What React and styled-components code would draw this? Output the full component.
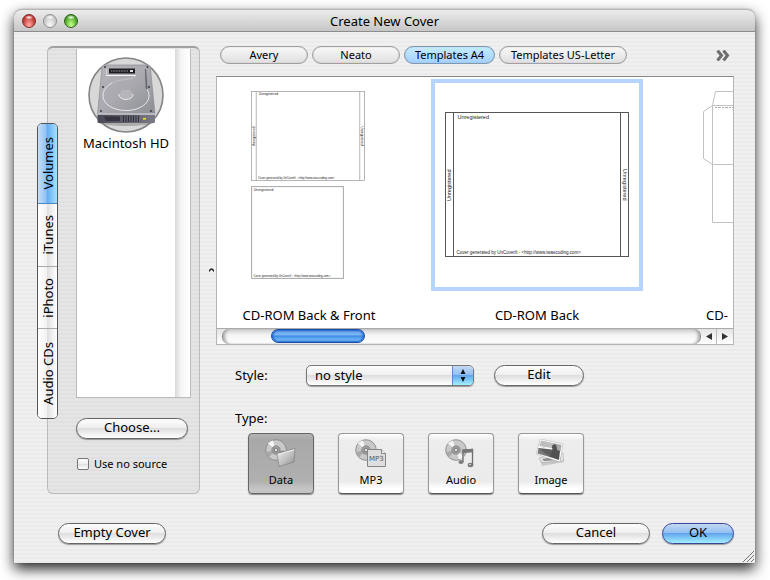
import { useState } from 'react';
import styled, { createGlobalStyle, css } from 'styled-components';

const GlobalStyle = createGlobalStyle`
  *,
  *::before,
  *::after {
    box-sizing: border-box;
  }

  body {
    margin: 0;
    background: #fff;
    color: #000;
    font-family: 'Lucida Grande', 'Noto Sans', 'Open Sans', sans-serif;
    font-size: 13px;
    line-height: 16px;
  }

  button,
  select {
    margin: 0;
    padding: 0;
    color: inherit;
    font: inherit;
  }
`;

const pinstripes = css`
  background-color: #eee;
  background-image: repeating-linear-gradient(
    to bottom,
    #ebebeb 0,
    #ebebeb 2px,
    #f0f0f0 2px,
    #f0f0f0 4px
  );
`;

const Page = styled.main`
  padding: 9px 15px 17px 14px;
  overflow: hidden;
`;

const Window = styled.section`
  ${pinstripes}
  border-radius: 8px 8px 0 0;
  box-shadow: 0 0 1px rgba(0, 0, 0, 0.6), 0 6px 14px rgba(0, 0, 0, 0.85);
  position: relative;
`;

const TitleBar = styled.header`
  display: grid;
  grid-template-columns: 1fr auto 1fr;
  align-items: center;
  height: 23px;
  padding: 0 8px;
  border-top: 1px solid #b4b4b4;
  border-bottom: 1px solid #8c8c8c;
  border-radius: 8px 8px 0 0;
  background: linear-gradient(#ececec, #c6c6c6);
`;

const Title = styled.h1`
  margin: 0;
  font-size: 13px;
  font-weight: 400;
`;

const Lights = styled.div`
  display: flex;
  gap: 7px;
`;

const Light = styled.button`
  width: 14px;
  height: 14px;
  border: 1px solid ${({ $edge }) => $edge};
  border-radius: 50%;
  background: radial-gradient(ellipse 4px 2px at 50% 20%, #fff, transparent),
    radial-gradient(ellipse at 50% 90%, ${({ $glow }) => $glow} 10%, ${({ $base }) => $base} 70%);
`;

const Main = styled.div`
  display: flex;
  padding: 14px 21px 0 23px;
`;

const SourceTabs = styled.div`
  z-index: 1;
  flex: none;
  align-self: flex-start;
  width: 21px;
  margin: 77px -11px 0 0;
  border: 1px solid #555;
  border-radius: 5px;
  overflow: hidden;
`;

const SourceTab = styled.button`
  display: flex;
  align-items: center;
  justify-content: center;
  width: 100%;
  height: ${({ $size }) => $size}px;
  border: 0;
  border-bottom: 1px solid #aaa;
  background: linear-gradient(to right, #fff, #f2f2f2 45%, #dedede 46%, #fff);

  &[aria-selected='true'] {
    border-bottom-color: #4a8ac0;
    background: linear-gradient(to right, #c5dff8, #8fc2f5 44%, #62aaf3 46%, #a6e2ff);
  }

  &:last-child {
    border-bottom: 0;
  }
`;

const TabText = styled.span`
  writing-mode: vertical-rl;
  transform: rotate(180deg);
  line-height: 20px;
`;

const SourcePanel = styled.div`
  flex: none;
  width: 153px;
  padding: 1px 8px 21px 28px;
  border: 1px solid #bbb;
  border-top: 2px solid #a0a0a0;
  border-radius: 6px;
  background: rgba(0, 0, 0, 0.045);
`;

const VolumeBox = styled.div`
  display: flex;
  height: 349px;
  border: 1px solid #bbb;
  border-top: 0;
  background: #fff;
`;

const VolumeList = styled.ul`
  flex: 1;
  margin: 0;
  padding: 8px 0 0;
  list-style: none;
`;

const Volume = styled.li`
  display: flex;
  flex-direction: column;
  align-items: center;
  gap: 2px;
  white-space: nowrap;
`;

const EmptyTrack = styled.div`
  width: 15px;
  background: linear-gradient(to right, #d8d8d8, #f6f6f6 40%, #fff);
`;

const aqua = {
  plain: 'linear-gradient(#fdfdfd, #eee 48%, #dedede 50%, #fff)',
  blue: 'linear-gradient(#c3d8f2, #93c0f2 46%, #62a5ec 50%, #a2f0ff)',
};

const PushButton = styled.button`
  width: ${({ $width }) => $width}px;
  height: 21px;
  padding-bottom: 2px;
  border: 1px solid ${({ $primary }) => ($primary ? '#3a449c' : '#666')};
  border-radius: 11px;
  background: ${({ $primary }) => ($primary ? aqua.blue : aqua.plain)};
  box-shadow: 0 1px 1px rgba(0, 0, 0, 0.35);
  line-height: 17px;
`;

const ChooseButton = styled(PushButton)`
  display: block;
  margin-top: 20px;
`;

const CheckLabel = styled.label`
  display: flex;
  align-items: center;
  gap: 5px;
  margin-top: 17px;
  font-size: 11px;
  white-space: nowrap;
`;

const CheckBox = styled.input`
  appearance: none;
  width: 12px;
  height: 12px;
  margin: 0 0 0 1px;
  border: 1px solid #777;
  border-radius: 2px;
  background: ${aqua.plain};

  &:checked {
    background: ${aqua.blue};
  }
`;

const Splitter = styled.div`
  display: flex;
  flex: none;
  align-items: center;
  justify-content: flex-end;
  width: 16px;
  padding-right: 2px;
`;

const Chooser = styled.div`
  flex: 1;
  min-width: 0;
`;

const CategoryBar = styled.nav`
  display: flex;
  align-items: center;
  gap: 4px;
  padding: 0 4px;
`;

const Category = styled.button`
  flex: none;
  width: ${({ $width }) => $width}px;
  height: 18px;
  border: 1px solid #a0a0a0;
  border-radius: 9px;
  background: linear-gradient(#f8f8f8, #dfdfdf);
  box-shadow: inset 0 0 1px #999;
  font-size: 11px;
  line-height: 16px;
  white-space: nowrap;

  &[aria-pressed='true'] {
    border-color: #8099b0;
    background: linear-gradient(#c4ecff, #a5d0ff);
  }
`;

const MoreButton = styled.button`
  display: flex;
  margin-left: auto;
  border: 0;
  background: none;
`;

const Gallery = styled.div`
  margin-top: 12px;
  border: 1px solid #b5b5b5;
  border-top-color: #888;
  background: #fff;
`;

const GalleryView = styled.div`
  height: 251px;
  padding-top: 2px;
  overflow: hidden;
`;

/* the strip is scrolled a little past its first item */
const GalleryStrip = styled.div`
  display: flex;
  gap: 16px;
  margin-left: -14px;
`;

const Template = styled.figure`
  flex: none;
  width: 212px;
  margin: 0;
`;

const TemplateFrame = styled.div`
  display: flex;
  flex-direction: column;
  gap: 5px;
  height: 212px;
  padding: ${({ $inset }) => $inset};
  border: 4px solid ${({ $selected }) => ($selected ? '#b5d5ff' : 'transparent')};
`;

const TemplateName = styled.figcaption`
  margin-top: 16px;
  padding-left: ${({ $start }) => $start || 0}px;
  text-align: ${({ $start }) => ($start ? 'left' : 'center')};
`;

const ScrollBar = styled.div`
  display: flex;
  height: 16px;
  border-top: 1px solid #aaa;
  background: linear-gradient(#e4e4e4, #fff);
`;

const ScrollTrack = styled.div`
  flex: 1;
  margin-left: 5px;
  padding-left: 48px;
  border: solid #8a8a8a;
  border-width: 0 1px;
  border-radius: 7px;
  background: linear-gradient(#cfcfcf, #f4f4f4 40%, #fff);
  box-shadow: inset 3px 0 3px -1px #aaa, inset -3px 0 3px -1px #aaa;
`;

const ScrollThumb = styled.div`
  width: 94px;
  height: 14px;
  border: 1px solid #1b4fae;
  border-radius: 7px;
  background: linear-gradient(#6aa5ec, #7bb6f5 40%, #3d8ae4 50%, #8cd4ff);
  box-shadow: inset 0 0 2px 1px #1d5cc4;
`;

const ScrollArrow = styled.button`
  display: flex;
  align-items: center;
  justify-content: center;
  width: 16px;
  border: 0;
  border-right: 1px solid #bbb;
  background: none;

  &:last-child {
    border-right: 0;
  }
`;

const StyleRow = styled.div`
  display: flex;
  align-items: center;
  margin-top: 20px;
  padding-left: 19px;
`;

const StyleLabel = styled.label`
  width: 71px;
  padding-bottom: 2px;
`;

const PopUp = styled.div`
  display: grid;
  grid-template-columns: 1fr 21px;
  width: 168px;
  height: 21px;
  margin-right: 20px;
  border: 1px solid #777;
  border-radius: 5px;
  background: ${aqua.plain};
  box-shadow: 0 1px 1px rgba(0, 0, 0, 0.35);
  overflow: hidden;
`;

const PopUpSelect = styled.select`
  grid-area: 1 / 1 / 2 / 3;
  appearance: none;
  padding: 0 8px 2px;
  border: 0;
  background: none;
`;

const PopUpArrows = styled.span`
  grid-area: 1 / 2 / 2 / 3;
  display: flex;
  align-items: center;
  justify-content: center;
  border-left: 1px solid #5c8cc4;
  background: ${aqua.blue};
  pointer-events: none;
`;

const TypeLabel = styled.div`
  margin-top: 24px;
  padding-left: 19px;
`;

const TypeRow = styled.div`
  display: flex;
  gap: 24px;
  margin-top: 7px;
  padding-left: 32px;
`;

const TypeButton = styled.button`
  display: flex;
  flex-direction: column;
  align-items: center;
  justify-content: space-between;
  width: 66px;
  height: 61px;
  padding: 5px 0;
  border: 1px solid #999;
  border-bottom-color: #555;
  border-radius: 4px;
  background: linear-gradient(#fff, #ededed 10%, #ebebeb 80%, #fff 92%);
  box-shadow: 0 1px 1px rgba(0, 0, 0, 0.4);
  font-size: 11px;

  &[aria-pressed='true'] {
    border-color: #666;
    background: linear-gradient(#b4b4b4, #a8a8a8 10%, #b0b0b0 80%, #c4c4c4 92%);
  }
`;

const Footer = styled.footer`
  display: flex;
  gap: 12px;
  padding: 29px 21px 19px 44px;
`;

const Spacer = styled.span`
  flex: 1;
`;

const ResizeGrip = styled.svg`
  position: absolute;
  right: 1px;
  bottom: 1px;
`;

const HardDiskIcon = () => (
  <svg width="76" height="76" viewBox="0 0 76 76" aria-hidden="true">
    <defs>
      <linearGradient id="hdTop" x1="0" y1="0" x2="1" y2="1">
        <stop offset="0" stopColor="#b4b4ba" />
        <stop offset="0.5" stopColor="#a9a9af" />
        <stop offset="1" stopColor="#8d8d95" />
      </linearGradient>
      <linearGradient id="hdFront" x1="0" y1="0" x2="1" y2="0">
        <stop offset="0" stopColor="#4a4956" />
        <stop offset="0.5" stopColor="#5f5e6b" />
        <stop offset="1" stopColor="#7b7a86" />
      </linearGradient>
    </defs>
    <circle cx="38" cy="38" r="37" fill="#d8d8d8" stroke="#858585" strokeWidth="1.6" />
    <ellipse cx="38" cy="66" rx="27" ry="3" fill="#777" opacity="0.45" />
    <path d="M16 8h44q2 0 2.300 2L67 57H9.500L14 10q.2-2 2-2z" fill="url(#hdTop)" stroke="#85858d" strokeWidth="0.6" />
    <path d="M9.500 57.500h57.500v7q0 1.500-1.500 1.500H11q-1.500 0-1.500-1.500z" fill="url(#hdFront)" />
    <path d="M9.500 57h57.500" stroke="#dedee4" />
    <path d="M18.500 12v6" stroke="#ddd" strokeWidth="0.800" />
    <path d="M18 18.500h30" stroke="#f4f4f4" />
    <rect x="21" y="11.500" width="26" height="5" fill="#1d1d22" />
    <path d="M23 14h17" stroke="#777" strokeWidth="1.400" strokeDasharray="1 0.600" />
    <path d="M42 14h3" stroke="#ddd" strokeWidth="2" />
    <path d="M24 26c-6 3-9 8-9 13 0 8 10 14.500 23 14.500S61 47 61 39c0-3-1-6-3-8" fill="none" stroke="#eeeef2" strokeWidth="0.900" />
    <path d="M24 26q6-3.500 14-3.500 7 0 10-4" fill="none" stroke="#c8c8ce" strokeWidth="0.800" />
    <ellipse cx="38" cy="37.500" rx="7" ry="5" fill="#b4b4ba" stroke="#eee" strokeWidth="0.900" />
    <path d="M31 37q1-4.500 7-4.500 6 0 7 4.500" fill="none" stroke="#85858d" strokeWidth="0.700" />
    <path d="M57.500 12l1.500 19q0 2-1 .500z" fill="#77777f" stroke="#5f5f68" strokeWidth="0.700" />
    <g fill="#2c2c33">
      <circle cx="17" cy="10" r="0.900" />
      <circle cx="59.500" cy="10" r="0.900" />
      <circle cx="15" cy="30" r="0.900" />
      <circle cx="61" cy="30" r="0.900" />
      <circle cx="13" cy="54" r="0.900" />
      <circle cx="63" cy="54" r="0.900" />
    </g>
    <path d="M16 59.500h16v4.500H18z" fill="#35343f" />
    <path d="M35.500 58.500v6.500M38 58.500v6.500M40.500 58.500v6.500M43 58.500v6.500M45.500 58.500v6.500M48 58.500v6.500M50.500 58.500v6.500" stroke="#2b2a34" strokeWidth="0.900" />
    <rect x="55" y="61" width="3" height="1.600" fill="#e8e52a" />
  </svg>
);

/* Back inlay: two spines and the body between them, drawn in print units. */
const BackCover = ({ width, ink }) => (
  <svg width={width} viewBox="0 0 368 290" fontFamily="'Liberation Sans', Arial, sans-serif" fontSize="11">
    <g fill="none" stroke={ink} strokeWidth="2">
      <rect x="1" y="1" width="366" height="288" />
      <path d="M17 1v288M351 1v288" />
    </g>
    <g fill="#222">
      <text x="25" y="14">Unregistered</text>
      <text transform="translate(12 178) rotate(-90)">Unregistered</text>
      <text transform="translate(355 114) rotate(90)">Unregistered</text>
      <text x="23" y="283" fontSize="9">
        {'Cover generated by UnCoverIt - <http://www.iwascoding.com>'}
      </text>
    </g>
  </svg>
);

const FrontCover = ({ width, ink }) => (
  <svg width={width} viewBox="0 0 300 300" fontFamily="'Liberation Sans', Arial, sans-serif" fontSize="11">
    <rect x="2" y="2" width="296" height="296" fill="none" stroke={ink} strokeWidth="3" />
    <g fill="#222">
      <text x="9" y="15">Unregistered</text>
      <text x="8" y="292" fontSize="9">
        {'Cover generated by UnCoverIt - <http://www.iwascoding.com>'}
      </text>
    </g>
  </svg>
);

const SleeveCover = () => (
  <svg width="60" height="134" viewBox="0 0 60 134" aria-hidden="true">
    <path
      d="M60 .5H12.500L9.500 14.500V131.500H60M9.500 14.500H60M9.500 14.500L.5 20.500V67.500L9.500 73.500H60"
      fill="none"
      stroke="#c2c2c2"
    />
    <path d="M12 16.500h48" stroke="#aaa" strokeDasharray="2 1 3 1" />
  </svg>
);

const Disc = () => (
  <g>
    <circle cx="11" cy="11" r="10.300" fill="#c9c9c9" stroke="#8a8a8a" strokeWidth="0.900" />
    <path d="M11 11L3 4.500A10 10 0 0 1 8 1.500zM11 11l8 6.500a10 10 0 0 1-5 3z" fill="#f4f4f4" />
    <path d="M11 11L1 13a10 10 0 0 0 3 5z" fill="#a9a9a9" />
    <circle cx="11" cy="11" r="4.200" fill="#9c9c9c" stroke="#858585" strokeWidth="0.800" />
    <circle cx="11" cy="11" r="1.700" fill="#e4e4e4" stroke="#707070" strokeWidth="0.800" />
  </g>
);

const DataIcon = () => (
  <svg width="32" height="29" viewBox="0 0 32 29" aria-hidden="true">
    <defs>
      <linearGradient id="folder" x1="0" y1="0" x2="1" y2="1">
        <stop offset="0" stopColor="#f0f0f0" />
        <stop offset="0.5" stopColor="#c4c4c4" />
        <stop offset="1" stopColor="#8e8e8e" />
      </linearGradient>
    </defs>
    <Disc />
    <path d="M14 13.500l1-1.500 4-.5 1 1 9-3 1 .5-.5 2-14.500 4z" fill="#8b8b8b" />
    <path d="M12 14.500l3-.5 15-4.500-1 13.500-15 4.500z" fill="url(#folder)" stroke="#777" strokeWidth="0.600" />
    <path d="M12.800 15.200L29.200 10.800" stroke="#fafafa" strokeWidth="0.800" />
  </svg>
);

const Mp3Icon = () => (
  <svg width="32" height="29" viewBox="0 0 32 29" aria-hidden="true">
    <Disc />
    <path d="M12.500 10.500h14l4 4v13h-18z" fill="#dedede" stroke="#858585" />
    <path d="M26.500 10.500v4h4" fill="#f8f8f8" stroke="#858585" />
    <text x="14" y="22" fill="#555" fontFamily="'DejaVu Sans', sans-serif" fontSize="7">
      MP3
    </text>
  </svg>
);

const AudioIcon = () => (
  <svg width="32" height="29" viewBox="0 0 32 29" aria-hidden="true">
    <Disc />
    <path d="M18 23V11l9.500-.5V26" fill="none" stroke="#6c6c6c" strokeWidth="1.300" />
    <path d="M17.400 10.500l10.700-.8v3.500l-10.700 1z" fill="#777" />
    <ellipse cx="16" cy="23" rx="2.600" ry="2" fill="#808080" />
    <ellipse cx="25.500" cy="26" rx="2.800" ry="2.200" fill="#777" />
    <circle cx="25" cy="25.500" r="0.800" fill="#eee" />
  </svg>
);

const ImageIcon = () => (
  <svg width="32" height="29" viewBox="0 0 32 29" aria-hidden="true">
    <path d="M5 21l23-2 1 4-22 4z" fill="#888" opacity="0.350" />
    <path d="M4 19l24-5 .5 8L7 23.500z" fill="#e9e9e9" stroke="#999" strokeWidth="0.500" />
    <path d="M7 20l19-3v4L9 22z" fill="#8a8a8a" />
    <path d="M5.500 0L28 5l-3 18L1 15z" fill="#fff" stroke="#aaa" strokeWidth="0.500" />
    <path d="M6.300 1.400L19 4.200l-1 5L4.200 7z" fill="#bdbdbd" />
    <path d="M3.500 9L17 10l-.8 8.500L2.500 14.500z" fill="#7a7a7a" />
    <path d="M19 4.200l7.500 1.800-1 6.500-7.500-1z" fill="#a8a8a8" />
    <path d="M17.500 6q3-2 4 1l.5 4 3 1-1 9-9-3 1.500-7z" fill="#505050" />
    <path d="M3.500 9L9 8.500l8 3-2 6-6-4z" fill="#5e5e5e" />
    <path d="M3.500 8.500l14 1.500" stroke="#fff" />
  </svg>
);

const TYPES = [
  { name: 'Data', Icon: DataIcon },
  { name: 'MP3', Icon: Mp3Icon },
  { name: 'Audio', Icon: AudioIcon },
  { name: 'Image', Icon: ImageIcon },
];

const SOURCES = [
  { name: 'Volumes', size: 80 },
  { name: 'iTunes', size: 63 },
  { name: 'iPhoto', size: 62 },
  { name: 'Audio CDs', size: 89 },
];

const CATEGORIES = [
  { name: 'Avery', width: 88 },
  { name: 'Neato', width: 88 },
  { name: 'Templates A4', width: 91 },
  { name: 'Templates US-Letter', width: 128 },
];

const App = () => {
  const [source, setSource] = useState('Volumes');
  const [category, setCategory] = useState('Templates A4');
  const [type, setType] = useState('Data');

  return (
    <Page>
      <GlobalStyle />
      <Window>
        <TitleBar>
          <Lights>
            <Light aria-label="Close" $edge="#7c2a28" $base="#c03a36" $glow="#ff9d98" />
            <Light aria-label="Minimize" $edge="#8f8f8f" $base="#c9c9c9" $glow="#f4f4f4" />
            <Light aria-label="Zoom" $edge="#2c5c1c" $base="#4fa52c" $glow="#b8ff80" />
          </Lights>
          <Title>Create New Cover</Title>
        </TitleBar>

        <Main>
          <SourceTabs role="tablist" aria-orientation="vertical">
            {SOURCES.map(({ name, size }) => (
              <SourceTab
                key={name}
                role="tab"
                aria-selected={name === source}
                $size={size}
                onClick={() => setSource(name)}
              >
                <TabText>{name}</TabText>
              </SourceTab>
            ))}
          </SourceTabs>

          <SourcePanel>
            <VolumeBox>
              <VolumeList>
                <Volume>
                  <HardDiskIcon />
                  Macintosh HD
                </Volume>
              </VolumeList>
              <EmptyTrack />
            </VolumeBox>
            <ChooseButton $width={112}>Choose...</ChooseButton>
            <CheckLabel>
              <CheckBox type="checkbox" />
              Use no source
            </CheckLabel>
          </SourcePanel>

          <Splitter>
            <svg width="5" height="4" viewBox="0 0 5 4" aria-hidden="true">
              <path d="M0 3.500Q2.500-1.500 5 3.500" fill="none" stroke="#222" strokeWidth="1.500" />
            </svg>
          </Splitter>

          <Chooser>
            <CategoryBar>
              {CATEGORIES.map(({ name, width }) => (
                <Category
                  key={name}
                  aria-pressed={name === category}
                  $width={width}
                  onClick={() => setCategory(name)}
                >
                  {name}
                </Category>
              ))}
              <MoreButton aria-label="More categories">
                <svg width="14" height="11" viewBox="0 0 14 11" aria-hidden="true">
                  <path d="M1.500 .5l4 5-4 5M7.500 .5l4 5-4 5" fill="none" stroke="#6e6e6e" strokeWidth="3" />
                </svg>
              </MoreButton>
            </CategoryBar>

            <Gallery>
              <GalleryView>
                <GalleryStrip>
                  <Template>
                    <TemplateFrame $inset="8px 44px">
                      <BackCover width={114} ink="#8a8a8a" />
                      <FrontCover width={93} ink="#a0a0a0" />
                    </TemplateFrame>
                    <TemplateName>CD-ROM Back &amp; Front</TemplateName>
                  </Template>
                  <Template>
                    <TemplateFrame $selected $inset="29px 10px">
                      <BackCover width={184} ink="#555" />
                    </TemplateFrame>
                    <TemplateName>CD-ROM Back</TemplateName>
                  </Template>
                  <Template>
                    <TemplateFrame $inset="8px 40px">
                      <SleeveCover />
                    </TemplateFrame>
                    <TemplateName $start={47}>CD-</TemplateName>
                  </Template>
                </GalleryStrip>
              </GalleryView>
              <ScrollBar>
                <ScrollTrack>
                  <ScrollThumb />
                </ScrollTrack>
                <ScrollArrow aria-label="Scroll left">
                  <svg width="6" height="7" viewBox="0 0 6 7" aria-hidden="true">
                    <path d="M6 0v7L0 3.500z" fill="#333" />
                  </svg>
                </ScrollArrow>
                <ScrollArrow aria-label="Scroll right">
                  <svg width="6" height="7" viewBox="0 0 6 7" aria-hidden="true">
                    <path d="M0 0v7l6-3.500z" fill="#333" />
                  </svg>
                </ScrollArrow>
              </ScrollBar>
            </Gallery>

            <StyleRow>
              <StyleLabel htmlFor="cover-style">Style:</StyleLabel>
              <PopUp>
                <PopUpSelect id="cover-style">
                  <option>no style</option>
                </PopUpSelect>
                <PopUpArrows>
                  <svg width="6" height="13" viewBox="0 0 6 13" aria-hidden="true">
                    <path d="M3 0l2.500 5h-5zM3 13L.5 8h5z" fill="#111" />
                  </svg>
                </PopUpArrows>
              </PopUp>
              <PushButton $width={90}>Edit</PushButton>
            </StyleRow>

            <TypeLabel id="cover-type">Type:</TypeLabel>
            <TypeRow role="group" aria-labelledby="cover-type">
              {TYPES.map(({ name, Icon }) => (
                <TypeButton key={name} aria-pressed={name === type} onClick={() => setType(name)}>
                  <Icon />
                  {name}
                </TypeButton>
              ))}
            </TypeRow>
          </Chooser>
        </Main>

        <Footer>
          <PushButton $width={108}>Empty Cover</PushButton>
          <Spacer />
          <PushButton $width={108}>Cancel</PushButton>
          <PushButton $width={72} $primary>
            OK
          </PushButton>
        </Footer>
        <ResizeGrip width="11" height="11" viewBox="0 0 11 11" aria-hidden="true">
          <path d="M0 11L11 0M4 11l7-7M8 11l3-3" stroke="#777" />
        </ResizeGrip>
      </Window>
    </Page>
  );
};

export default App;
